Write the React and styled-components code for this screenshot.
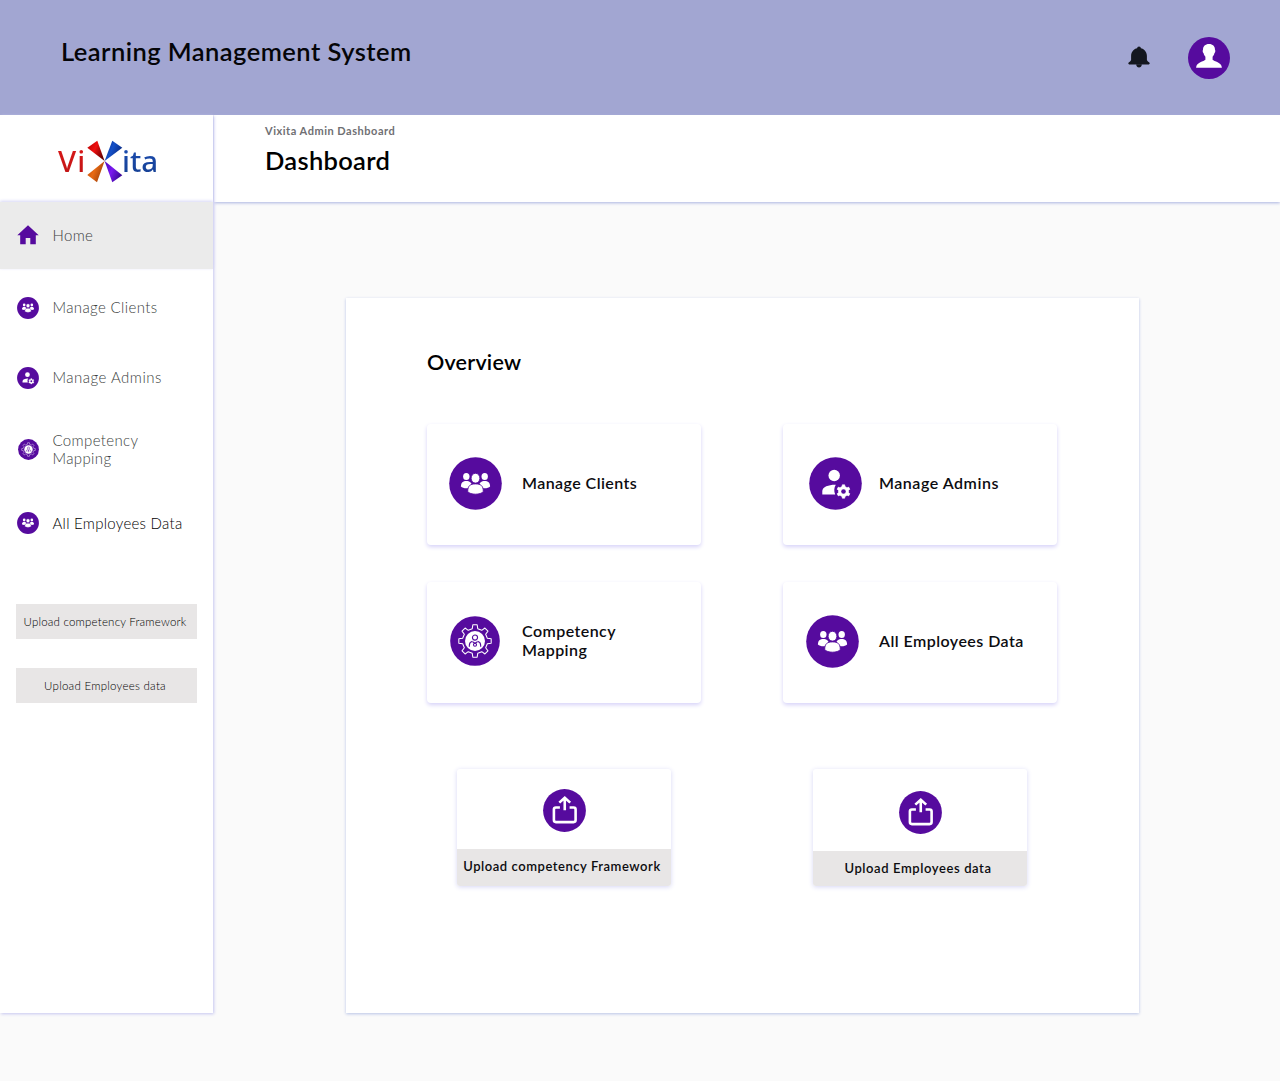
import React from "react";
import styled, { createGlobalStyle } from "styled-components";

const PURPLE = "#560b9e";

const GlobalStyle = createGlobalStyle`
  *, *::before, *::after { box-sizing: border-box; }
  body {
    margin: 0;
    background: #fafafa;
    font-family: Lato, "Liberation Sans", sans-serif;
    color: #0c0c10;
  }
  h1, h2, h3, p { margin: 0; }
  button { font-family: inherit; border: 0; color: inherit; padding: 0; cursor: pointer; }
`;

const Page = styled.div`
  min-height: 1081px;
  background: #fafafa;
`;

const Header = styled.header`
  height: 115px;
  padding: 0 50px 0 61px;
  display: flex;
  justify-content: space-between;
  align-items: center;
  background: #a2a6d2;
`;

const AppTitle = styled.h1`
  font-size: 25.5px;
  line-height: 30px;
  font-weight: 600;
  letter-spacing: 0.45px;
  padding-bottom: 14px;
  color: #050508;
  white-space: nowrap;
`;

const HeaderActions = styled.div`
  display: flex;
  align-items: center;
  gap: 38px;
`;

const Body = styled.div`
  display: flex;
  align-items: flex-start;
`;

const Sidebar = styled.aside`
  width: 213px;
  height: 898px;
  flex: none;
  background: #fff;
  box-shadow: 1px 1px 3px #c6c6f0;
  position: relative;
`;

const LogoBox = styled.div`
  height: 87px;
  display: flex;
  justify-content: flex-start;
  padding: 25px 0 0 58px;
`;

const LogoText = styled.span`
  font-family: "Noto Sans", sans-serif;
  font-size: 29.5px;
  line-height: 41px;
  font-weight: 500;
  letter-spacing: ${(p) => p.$spacing || "0"};
  color: transparent;
  background: ${(p) => p.$fill};
  background-clip: text;
  -webkit-background-clip: text;
`;

const LogoMark = styled.svg`
  flex: none;
  margin: 0 -1px 0 1px;
`;

const Nav = styled.nav`
  display: flex;
  flex-direction: column;
`;

const NavItem = styled.a`
  display: flex;
  align-items: center;
  gap: 13.5px;
  height: ${(p) => p.$height}px;
  padding-left: 17px;
  background: ${(p) => (p.$active ? "#ebebeb" : "transparent")};
  box-shadow: ${(p) => (p.$active ? "0 -1px 3px #d6d6f5" : "none")};
  color: ${(p) => (p.$dark ? "#000" : "#3c3f41")};
  font-size: 15px;
  line-height: 17.5px;
  font-weight: 300;
  letter-spacing: ${(p) => p.$spacing || "0.36px"};
`;

const NavIcon = styled.span`
  width: 22px;
  height: 22px;
  flex: none;
  display: flex;
  align-items: center;
  justify-content: center;
  padding-bottom: 1px;
`;

const SideButtons = styled.div`
  display: flex;
  flex-direction: column;
  gap: 28.5px;
  padding: 47px 16px 0 16px;
`;

const SideButton = styled.button`
  height: 35px;
  padding-right: 3px;
  background: #e8e6e6;
  color: #000;
  font-size: 11.5px;
  font-weight: 300;
  letter-spacing: ${(p) => p.$spacing};
  white-space: nowrap;
`;

const Main = styled.main`
  flex: 1;
  min-width: 0;
`;

const SubHeader = styled.div`
  height: 87px;
  margin-left: 1px;
  padding: 8px 0 0 51px;
  background: #fff;
  box-shadow: 0 1px 3px #a9b2e0;
`;

const Crumb = styled.p`
  font-size: 11px;
  line-height: 16px;
  font-weight: 700;
  letter-spacing: 0.52px;
  color: #6f6f73;
`;

const PageTitle = styled.h2`
  margin-top: 6px;
  font-size: 25.5px;
  line-height: 30px;
  font-weight: 600;
  letter-spacing: 0.3px;
  color: #000;
`;

const Panel = styled.section`
  width: 793px;
  height: 715px;
  margin: 96px 0 0 133px;
  padding: 50px 81px 0;
  background: #fff;
  box-shadow: 0 1px 3px #b7c3e6;
`;

const PanelTitle = styled.h3`
  font-size: 21.5px;
  line-height: 28px;
  font-weight: 600;
  letter-spacing: 0.22px;
  color: #000;
`;

const CardGrid = styled.div`
  margin-top: 48px;
  display: grid;
  grid-template-columns: 274px 274px;
  gap: 37px 82px;
`;

const Card = styled.a`
  height: 121px;
  display: flex;
  align-items: center;
  padding: 0 0 ${(p) => p.$lift || 3}px ${(p) => p.$inset}px;
  gap: ${(p) => p.$gap}px;
  border-radius: 4px;
  background: #fff;
  box-shadow: 0 2px 4px #d6d2f8;
  font-size: 16px;
  line-height: 19px;
  font-weight: 600;
  letter-spacing: ${(p) => p.$spacing};
`;

const CardLabel = styled.span`
  padding-bottom: ${(p) => p.$rise ?? 2}px;
`;

const UploadGrid = styled.div`
  margin-top: 66px;
  display: grid;
  grid-template-columns: 214px 214px;
  gap: 142px;
  padding-left: 30px;
`;

const UploadCard = styled.div`
  height: 117px;
  display: flex;
  flex-direction: column;
  border-radius: 3px;
  overflow: hidden;
  background: #fff;
  box-shadow: 0 1px 5px #d6d6f5;
`;

const UploadTop = styled.div`
  flex: 1;
  display: flex;
  justify-content: center;
  align-items: center;
  padding-top: ${(p) => p.$drop}px;
`;

const UploadButton = styled.button`
  height: ${(p) => p.$height}px;
  padding: 0 4px ${(p) => p.$rise}px 0;
  background: #e8e6e6;
  font-size: 13px;
  font-weight: 600;
  letter-spacing: ${(p) => p.$spacing};
  white-space: nowrap;
`;

function gearPath(cx, cy, teeth, outer, root) {
  const step = (Math.PI * 2) / teeth;
  const pts = [];
  for (let i = 0; i < teeth; i++) {
    const a = i * step - Math.PI / 2;
    [[-0.28, root], [-0.17, outer], [0.17, outer], [0.28, root]].forEach(([f, r]) => {
      pts.push(`${(cx + r * Math.cos(a + f * step)).toFixed(2)} ${(cy + r * Math.sin(a + f * step)).toFixed(2)}`);
    });
  }
  return `M${pts.join("L")}Z`;
}

const DiscSvg = styled.svg`
  flex: none;
`;

const Disc = ({ size, children }) => (
  <DiscSvg width={size} height={size} viewBox="-26.5 -26.5 53 53">
    <circle r="26.3" fill={PURPLE} />
    {children}
  </DiscSvg>
);

const TeamIcon = ({ size }) => (
  <Disc size={size}>
    <g fill="#fff">
      <ellipse cx="-9.2" cy="-7" rx="3.2" ry="3.6" />
      <ellipse cx="9.2" cy="-7" rx="3.2" ry="3.6" />
      <path d="M-14.6 3c0-4.300 2.200-5.600 5.400-5.600s5.600 1.300 5.600 5.600c-2.500 2.400-8.800 2.400-11 0z" />
      <path d="M14.6 3c0-4.300-2.200-5.600-5.400-5.600s-5.600 1.300-5.600 5.600c2.500 2.400 8.800 2.400 11 0z" />
    </g>
    <g fill="#fff" stroke={PURPLE} strokeWidth="0.9">
      <ellipse cx="0" cy="-5.300" rx="4.400" ry="4.900" />
      <path d="M-7.800 8c0-5.800 2.600-7.600 7.800-7.600s7.800 1.800 7.800 7.600c-2.400 3.600-13.200 3.600-15.600 0z" />
    </g>
  </Disc>
);

const AdminIcon = ({ size }) => (
  <Disc size={size}>
    <circle cx="-1.3" cy="-8" r="5.7" fill="#fff" />
    <path d="M-13.2 11V7.6C-13.2 3.1-6.2 1 0.3 1.2C-1.5 4.1-1.7 7.7-0.3 11z" fill="#fff" />
    <path d={gearPath(8, 8, 6, 6.8, 5.2)} fill="#fff" stroke="#fff" strokeWidth="0.6" strokeLinejoin="round" />
    <circle cx="8" cy="8" r="2.3" fill={PURPLE} />
  </Disc>
);

const CompetencyIcon = ({ size }) => (
  <Disc size={size}>
    <path d={gearPath(0, 0, 8, 17.3, 13.4)} fill="none" stroke="#fff" strokeWidth="1.1" strokeLinejoin="round" />
    <circle r="10.6" fill="#fff" />
    <g fill="none" stroke={PURPLE} strokeWidth="1.2">
      <circle cx="0" cy="-3.6" r="2.7" />
      <path d="M-6 6V4.4C-6 2-4.2 0.6-2.7 0.2M6 6V4.4C6 2 4.2 0.6 2.7 0.2" />
      <circle cx="0" cy="4" r="1.6" />
      <path d="M-2.6 0.8L0 2.4L2.6 0.8" />
    </g>
  </Disc>
);

const UploadIcon = () => (
  <svg width="43" height="43" viewBox="-21.5 -21.5 43 43">
    <circle r="21.4" fill={PURPLE} />
    <g fill="none" stroke="#fff" strokeWidth="2.6">
      <path d="M-4.6-3H-8.6Q-10.6-3-10.6-1V9.6Q-10.6 11.6-8.6 11.6H9.1Q11.1 11.6 11.1 9.6V-1Q11.1-3 9.1-3H5.1" />
      <path d="M.25-.2V-12.6M-5.2-7.9L.25-12.800L5.7-7.9" />
    </g>
  </svg>
);

const HomeIcon = () => (
  <svg width="22" height="20" viewBox="0 0 22 20">
    <path d="M11 .3L.3 10.2H3.2V19.2H8.7V12.9H13.3V19.2H18.8V10.2H21.7Z" fill={PURPLE} />
  </svg>
);

const BellSvg = styled.svg`
  margin-bottom: 2px;
`;

const BellIcon = () => (
  <BellSvg width="22" height="22" viewBox="0 0 22 22">
    <g fill="#14171f">
      <circle cx="11" cy="2.4" r="1.9" />
      <path d="M3.1 14V9.8C3.1 5.4 6.6 2 11 2s7.900 3.400 7.900 7.800V14C19.300 15.200 20.500 15.700 21.300 16.400C22.200 17.300 21.600 18.600 20.300 18.600H1.700C.4 18.600-.2 17.300.7 16.400C1.500 15.700 2.700 15.200 3.100 14Z" />
      <path d="M8.200 18.200h5.600c0 4.400-5.600 4.400-5.600 0z" />
    </g>
  </BellSvg>
);

const AvatarIcon = () => (
  <svg width="42" height="42" viewBox="-21 -21 42 42">
    <circle r="21" fill={PURPLE} />
    <path
      fill="#fff"
      d="M0-14C3.800-14 6-11.700 6-8.300C6.600-7.800 6.300-5.500 5.500-5C5.100-3.200 4.300-2 3.600-1.200V1.800C5 3.500 12.600 4.200 12.900 9.700H-12.900C-12.600 4.200-5 3.500-3.600 1.800V-1.200C-4.300-2-5.100-3.200-5.500-5C-6.300-5.500-6.600-7.800-6-8.300C-6-11.700-3.800-14 0-14Z"
    />
  </svg>
);

const Logo = () => (
  <LogoBox>
    <LogoText $spacing="1px" $fill="linear-gradient(#e01818, #a81414)">Vi</LogoText>
    <LogoMark width="36" height="43" viewBox="0 0 36 43">
      <defs>
        <linearGradient id="red" x1="0" y1="0" x2="1" y2="0.6">
          <stop offset="0" stopColor="#b00000" />
          <stop offset="0.5" stopColor="#f01010" />
          <stop offset="1" stopColor="#600" />
        </linearGradient>
        <linearGradient id="blue" x1="0" y1="0" x2="1" y2="0.5">
          <stop offset="0" stopColor="#0a2a80" />
          <stop offset="0.5" stopColor="#1450c8" />
          <stop offset="1" stopColor="#0a2a80" />
        </linearGradient>
        <linearGradient id="orange" x1="0" y1="0" x2="1" y2="0.5">
          <stop offset="0" stopColor="#b84800" />
          <stop offset="0.5" stopColor="#e86a14" />
          <stop offset="1" stopColor="#a04008" />
        </linearGradient>
        <linearGradient id="violet" x1="0" y1="0" x2="1" y2="0.5">
          <stop offset="0" stopColor="#4808b8" />
          <stop offset="0.5" stopColor="#7a18f0" />
          <stop offset="1" stopColor="#3c0898" />
        </linearGradient>
      </defs>
      <path d="M.3 7.700L10.300.7L17.600 21Z" fill="url(#red)" />
      <path d="M25.300.7L35.300 7.700L17.600 21Z" fill="url(#blue)" />
      <path d="M.3 35L10 42.300L17.600 21Z" fill="url(#orange)" />
      <path d="M35.300 35.300L25.300 42.300L17.600 21Z" fill="url(#violet)" />
    </LogoMark>
    <LogoText $fill="linear-gradient(#1c50b8, #123478)">ita</LogoText>
  </LogoBox>
);

export default function App() {
  return (
    <Page>
      <GlobalStyle />
      <Header>
        <AppTitle>Learning Management System</AppTitle>
        <HeaderActions>
          <BellIcon />
          <AvatarIcon />
        </HeaderActions>
      </Header>
      <Body>
        <Sidebar>
          <Logo />
          <Nav>
            <NavItem $active $height={67}>
              <NavIcon><HomeIcon /></NavIcon>Home
            </NavItem>
            <NavItem $height={78}>
              <NavIcon><TeamIcon size={22} /></NavIcon>Manage Clients
            </NavItem>
            <NavItem $height={62} $spacing="0.48px">
              <NavIcon><AdminIcon size={22} /></NavIcon>Manage Admins
            </NavItem>
            <NavItem $height={81}>
              <NavIcon><CompetencyIcon size={21} /></NavIcon>
              <span>Competency<br />Mapping</span>
            </NavItem>
            <NavItem $dark $height={67} $spacing="0.28px">
              <NavIcon><TeamIcon size={22} /></NavIcon>All Employees Data
            </NavItem>
          </Nav>
          <SideButtons>
            <SideButton $spacing="0.2px">Upload competency Framework</SideButton>
            <SideButton $spacing="0.26px">Upload Employees data</SideButton>
          </SideButtons>
        </Sidebar>
        <Main>
          <SubHeader>
            <Crumb>Vixita Admin Dashboard</Crumb>
            <PageTitle>Dashboard</PageTitle>
          </SubHeader>
          <Panel>
            <PanelTitle>Overview</PanelTitle>
            <CardGrid>
              <Card $inset={22} $gap={20} $spacing="0.43px">
                <TeamIcon size={53} />
                <CardLabel>Manage Clients</CardLabel>
              </Card>
              <Card $inset={26} $gap={17} $spacing="0.53px">
                <AdminIcon size={53} />
                <CardLabel>Manage Admins</CardLabel>
              </Card>
              <Card $inset={23} $gap={22} $lift={4} $spacing="0.43px">
                <CompetencyIcon size={50} />
                <CardLabel>Competency<br />Mapping</CardLabel>
              </Card>
              <Card $inset={23} $gap={20} $lift={2} $spacing="0.45px">
                <TeamIcon size={53} />
                <CardLabel>All Employees Data</CardLabel>
              </Card>
            </CardGrid>
            <UploadGrid>
              <UploadCard>
                <UploadTop $drop={2}><UploadIcon /></UploadTop>
                <UploadButton $height={37} $rise={4} $spacing="0.55px">Upload competency Framework</UploadButton>
              </UploadCard>
              <UploadCard>
                <UploadTop $drop={5}><UploadIcon /></UploadTop>
                <UploadButton $height={35} $rise={2} $spacing="0.6px">Upload Employees data</UploadButton>
              </UploadCard>
            </UploadGrid>
          </Panel>
        </Main>
      </Body>
    </Page>
  );
}
